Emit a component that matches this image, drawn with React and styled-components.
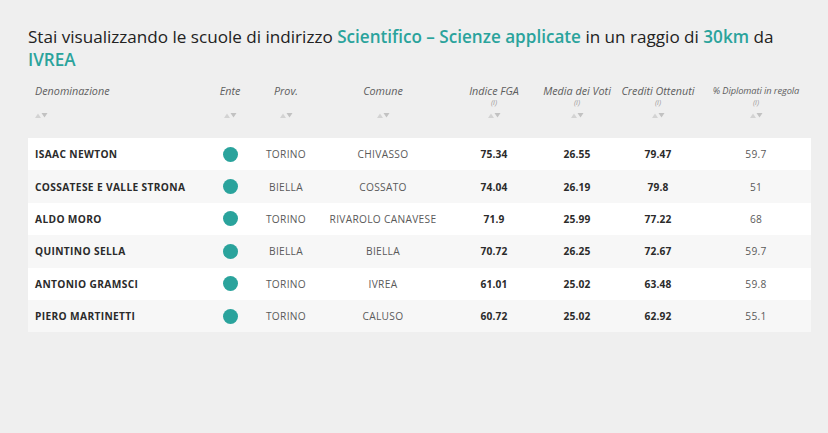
import React from 'react';
import styled, { createGlobalStyle } from 'styled-components';

const GlobalStyle = createGlobalStyle`
  html, body {
    margin: 0;
    padding: 0;
    background: #efefef;
    font-family: "Open Sans", "Liberation Sans", sans-serif;
  }
`;

const teal = '#2aa39c';
const cols = '177px 50px 62px 132px 90px 76px 86px 110px';

const Page = styled.div`
  width: 828px;
  height: 433px;
  box-sizing: border-box;
  padding: 25px 17px 0 28px;
  background: #efefef;
`;

const Title = styled.h1`
  margin: 0;
  font-size: 17.1px;
  line-height: 23px;
  font-weight: 400;
  color: #222;
`;

const Hi = styled.span`
  color: ${teal};
  font-weight: 600;
`;

const HeadRow = styled.div`
  display: grid;
  grid-template-columns: ${cols};
  margin-top: 11px;
  height: 56px;
`;

const HeadCell = styled.div`
  display: flex;
  flex-direction: column;
  align-items: ${(p) => (p.$left ? 'flex-start' : 'center')};
  padding-left: ${(p) => (p.$left ? '7px' : '0')};
  padding-top: 2px;
`;

const Label = styled.div`
  font-style: italic;
  font-size: ${(p) => (p.$small ? '9.3px' : '10.8px')};
  line-height: 14px;
  color: #5e5e5e;
  white-space: nowrap;
  letter-spacing: ${(p) => (p.$small ? '-0.1px' : '0')};
`;

const Info = styled.div`
  font-style: italic;
  font-size: 7.5px;
  line-height: 8px;
  color: #9c9c9c;
`;

const Sort = styled.svg`
  margin-top: ${(p) => (p.$info ? '7px' : '15px')};
  display: block;
`;

const Body = styled.div`
  display: flex;
  flex-direction: column;
`;

const Row = styled.div`
  display: grid;
  grid-template-columns: ${cols};
  height: 32.4px;
  align-items: center;
  background: ${(p) => (p.$alt ? '#f7f7f7' : '#ffffff')};
  font-size: 10.2px;
`;

const Name = styled.div`
  padding-left: 7px;
  font-weight: 700;
  color: #2b2b2b;
  letter-spacing: 0.35px;
`;

const Dot = styled.div`
  justify-self: center;
  width: 15px;
  height: 15px;
  border-radius: 50%;
  background: ${teal};
`;

const Cell = styled.div`
  text-align: center;
  color: ${(p) => (p.$bold ? '#2b2b2b' : '#5a5a5a')};
  font-weight: ${(p) => (p.$bold ? 700 : 400)};
  letter-spacing: ${(p) => (p.$bold ? '0.2px' : '0.3px')};
`;

const SortIcon = ({ info }) => (
  <Sort $info={info} width="13" height="5" viewBox="0 0 13 5">
    <path d="M0 5 L3 0.5 L6 5 Z" fill="#d3d3d3" />
    <path d="M6.5 0 L12.5 0 L9.5 4.5 Z" fill="#c2c2c2" />
  </Sort>
);

const headers = [
  { label: 'Denominazione', left: true },
  { label: 'Ente' },
  { label: 'Prov.' },
  { label: 'Comune' },
  { label: 'Indice FGA', info: true },
  { label: 'Media dei Voti', info: true },
  { label: 'Crediti Ottenuti', info: true },
  { label: '% Diplomati in regola', info: true, small: true },
];

const rows = [
  ['ISAAC NEWTON', 'TORINO', 'CHIVASSO', '75.34', '26.55', '79.47', '59.7'],
  ['COSSATESE E VALLE STRONA', 'BIELLA', 'COSSATO', '74.04', '26.19', '79.8', '51'],
  ['ALDO MORO', 'TORINO', 'RIVAROLO CANAVESE', '71.9', '25.99', '77.22', '68'],
  ['QUINTINO SELLA', 'BIELLA', 'BIELLA', '70.72', '26.25', '72.67', '59.7'],
  ['ANTONIO GRAMSCI', 'TORINO', 'IVREA', '61.01', '25.02', '63.48', '59.8'],
  ['PIERO MARTINETTI', 'TORINO', 'CALUSO', '60.72', '25.02', '62.92', '55.1'],
];

export default function App() {
  return (
    <>
      <GlobalStyle />
      <Page>
        <Title>
          Stai visualizzando le scuole di indirizzo <Hi>Scientifico – Scienze applicate</Hi> in un
          raggio di <Hi>30km</Hi> da <Hi>IVREA</Hi>
        </Title>
        <HeadRow>
          {headers.map((h) => (
            <HeadCell key={h.label} $left={h.left}>
              <Label $small={h.small}>{h.label}</Label>
              {h.info && <Info>(i)</Info>}
              <SortIcon info={h.info} />
            </HeadCell>
          ))}
        </HeadRow>
        <Body>
          {rows.map((r, i) => (
            <Row key={r[0]} $alt={i % 2 === 1}>
              <Name>{r[0]}</Name>
              <Dot />
              <Cell>{r[1]}</Cell>
              <Cell>{r[2]}</Cell>
              <Cell $bold>{r[3]}</Cell>
              <Cell $bold>{r[4]}</Cell>
              <Cell $bold>{r[5]}</Cell>
              <Cell>{r[6]}</Cell>
            </Row>
          ))}
        </Body>
      </Page>
    </>
  );
}
